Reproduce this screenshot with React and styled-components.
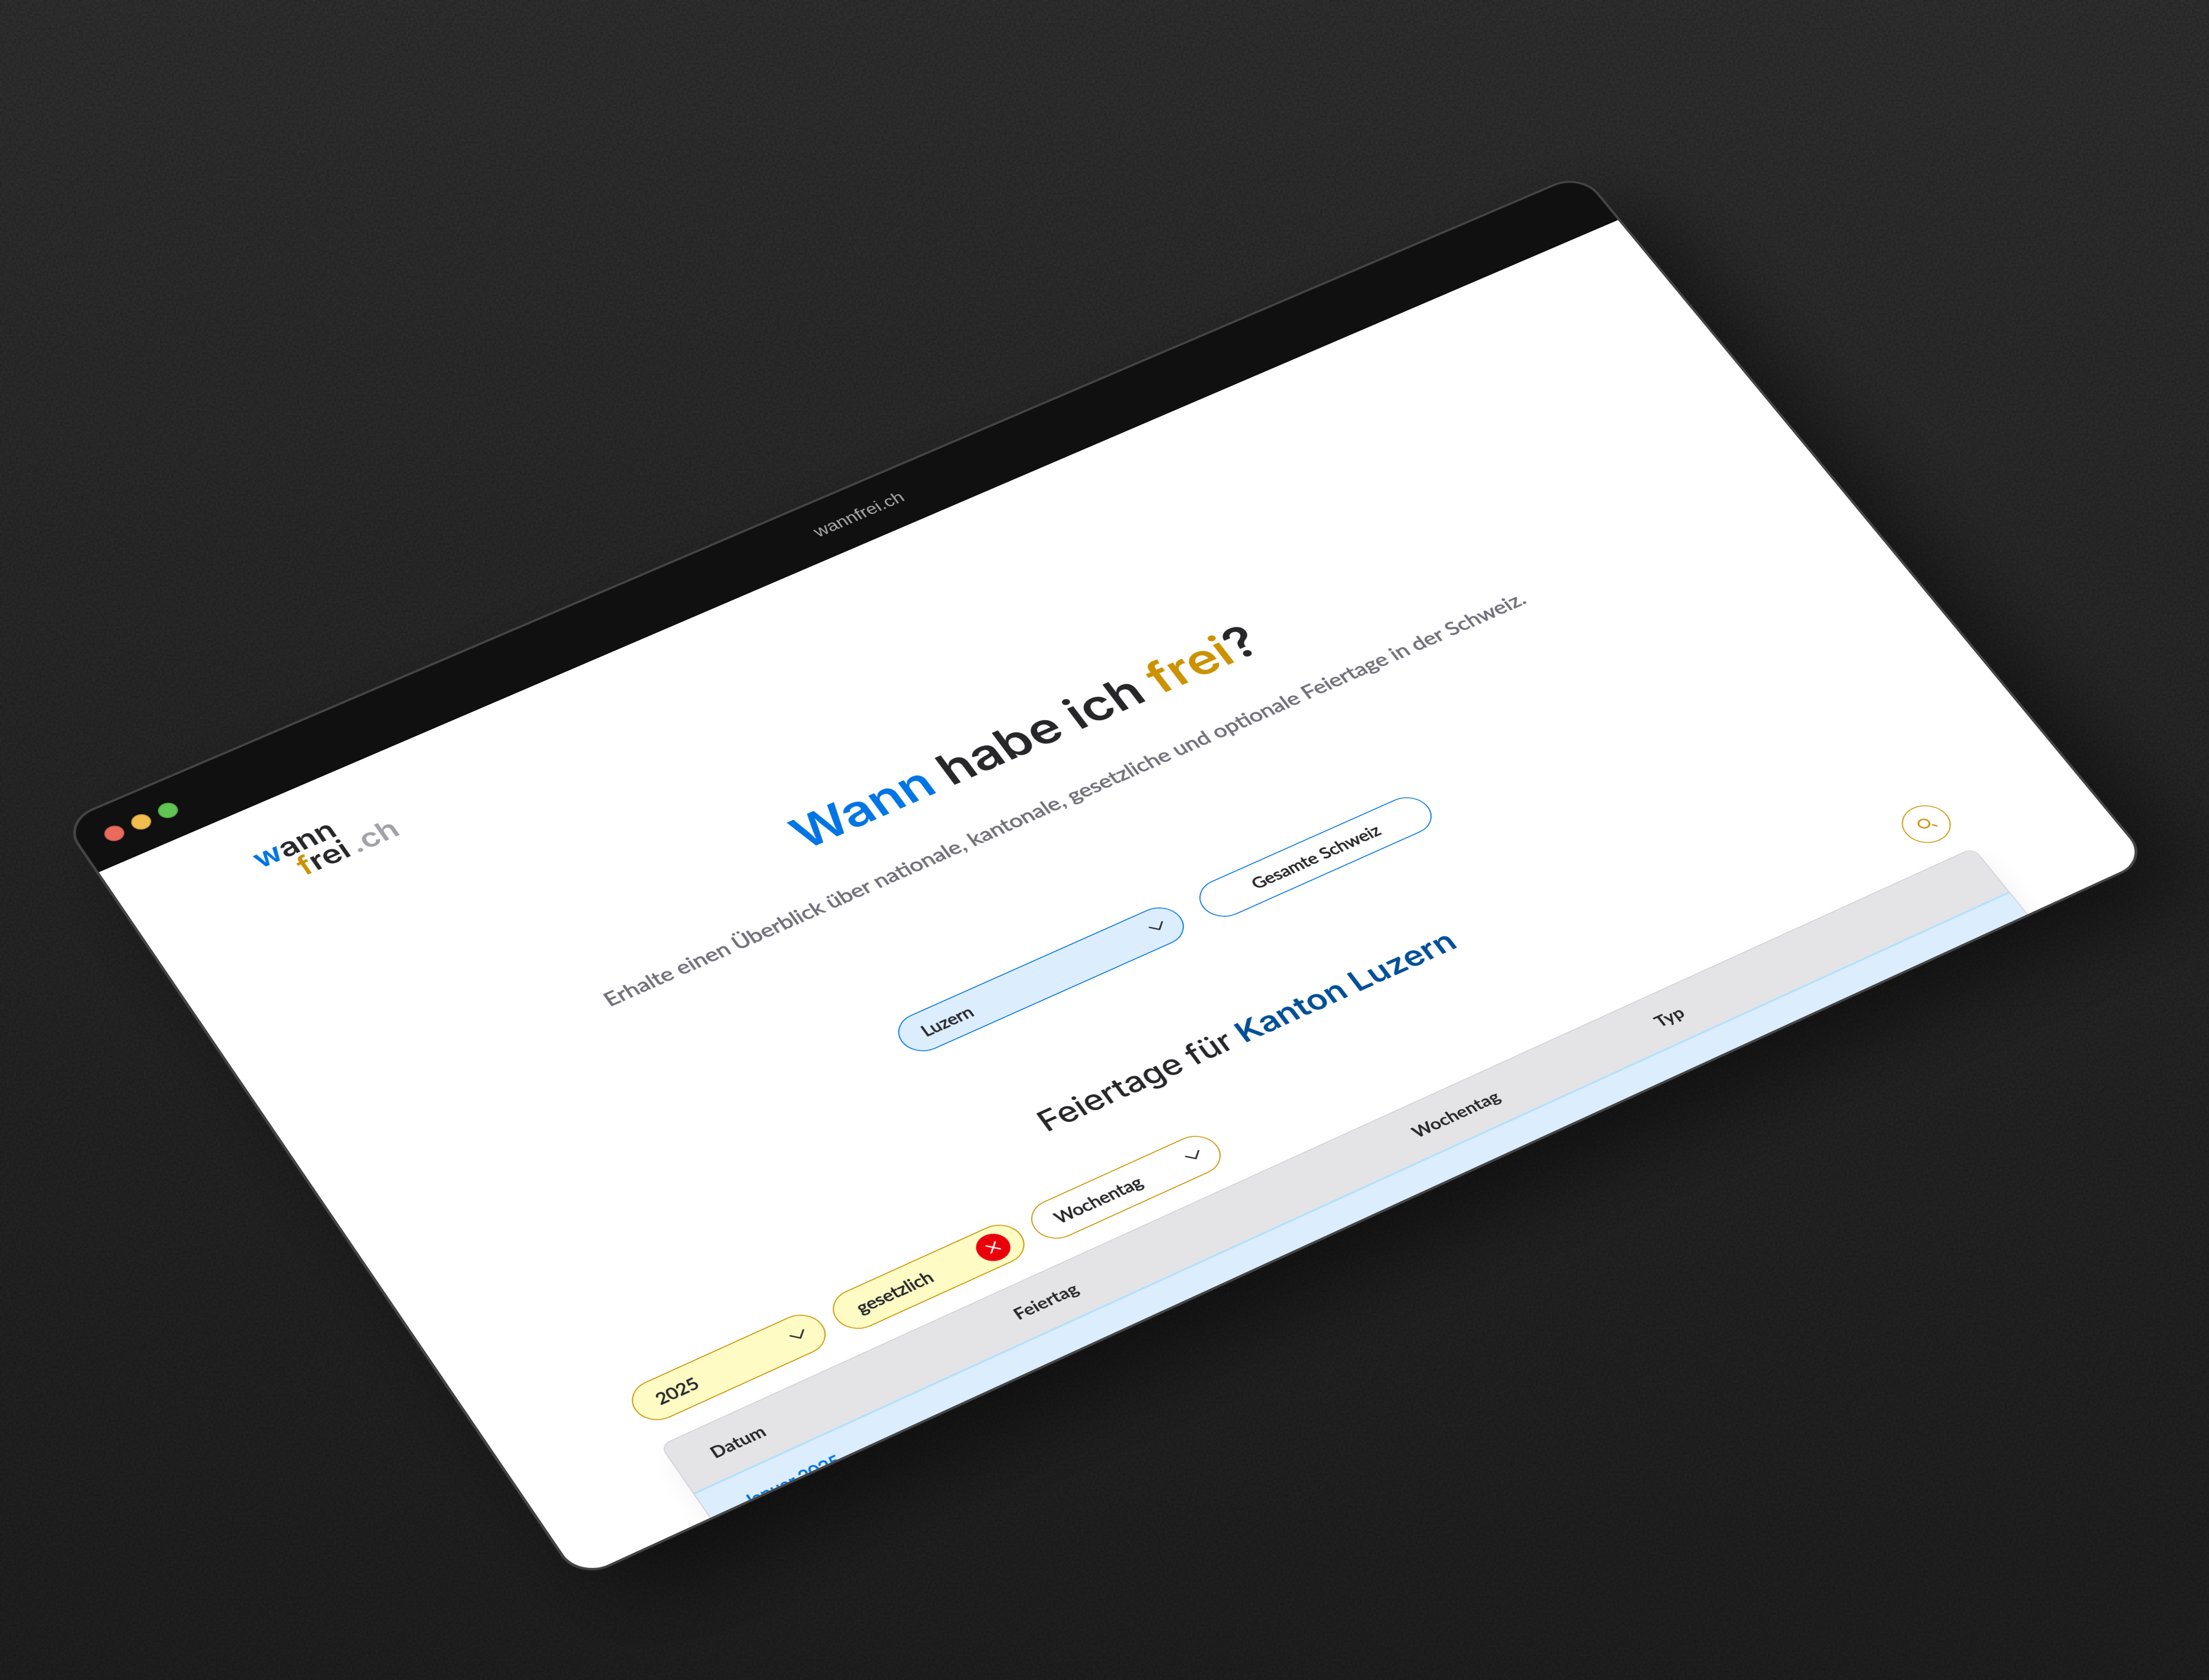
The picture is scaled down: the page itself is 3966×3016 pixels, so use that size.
import React, { useEffect, useState } from "react";
import styled, { createGlobalStyle, css } from "styled-components";

const DESIGN_WIDTH = 3966;
const PERSPECTIVE =
  "matrix3d(0.895841, -0.359106, 0, 0.0000155044, 0.449357, 0.625648, 0, -0.0000264151, 0, 0, 1, 0, 110, 1475, 0, 1)";

const color = {
  ink: "#27272a",
  muted: "#71717a",
  faint: "#a1a1aa",
  blue: "#0275e4",
  navy: "#004f98",
  sky: "#dcedfe",
  skyLine: "#b4e0fb",
  gold: "#cc9200",
  lemon: "#fefbc4",
  red: "#e9000b",
  zinc: "#e4e4e7",
  zincLine: "#d4d4d8",
};

const display = `Inter, "Liberation Sans", sans-serif`;
const body = `Lato, "Open Sans", sans-serif`;

const GlobalStyle = createGlobalStyle`
  *, *::before, *::after { box-sizing: border-box; }
  html { background: #1c1c1c; }
  body { margin: 0; }
`;

const Scene = styled.div`
  position: relative;
  height: 100vh;
  overflow: hidden;
  background: linear-gradient(#2f2f2f, #262626 50%, #1f1f1f);
`;

const Grain = styled.svg`
  position: absolute;
  inset: 0;
  width: 100%;
  height: 100%;
`;

const Device = styled.div`
  position: relative;
  display: flex;
  flex-direction: column;
  width: 3204px;
  aspect-ratio: 400 / 243;
  overflow: hidden;
  border: 5px solid #444444;
  border-radius: 62px;
  background: #444444;
  transform-origin: 0 0;
  box-shadow: 50px 90px 180px rgba(0, 0, 0, 0.5);
`;

const TitleBar = styled.div`
  display: grid;
  grid-template-columns: 1fr auto 1fr;
  align-items: center;
  flex: none;
  height: 134px;
  padding: 0 47px;
  background: #101010;
`;

const Lights = styled.div`
  display: flex;
  gap: 18px;
`;

const Light = styled.span`
  width: 36px;
  height: 36px;
  border: 2px solid rgba(0, 0, 0, 0.16);
  border-radius: 50%;
  background: ${(p) => p.$fill};
`;

const Address = styled.span`
  font: 400 36px/44px "Liberation Sans", Arial, sans-serif;
  color: #a9a9a9;
`;

const Page = styled.div`
  flex: 1;
  min-height: 0;
  overflow: hidden;
  padding: 88px 254px 0;
  background: #ffffff;
  color: ${color.ink};
  font-family: ${body};
`;

const Logo = styled.a`
  display: grid;
  grid-template-columns: auto auto;
  justify-content: start;
  justify-items: end;
  column-gap: 8px;
  font: 600 60px/54px ${display};
  color: ${color.ink};
  text-decoration: none;
`;

const LogoLine = styled.span`
  grid-column: 1;
`;

const LogoSuffix = styled.span`
  grid-row: 2;
  grid-column: 2;
  color: ${color.faint};
`;

const Tint = styled.span`
  color: ${(p) => color[p.$tone]};
`;

const Hero = styled.header`
  display: flex;
  flex-direction: column;
  align-items: center;
  padding-top: 305px;
`;

const Title = styled.h1`
  margin: 0;
  font: 600 100px/96px ${display};
`;

const Lead = styled.p`
  margin: 87px 0 0;
  font: 400 43px/56px ${body};
  color: ${color.muted};
  -webkit-text-stroke: 1px currentColor;
`;

const RegionRow = styled.div`
  display: flex;
  justify-content: center;
  gap: 46px;
  margin-top: 270px;
`;

const control = css`
  height: 88px;
  border: 2px solid ${(p) => color[p.$line]};
  border-radius: 44px;
  background: ${(p) => (p.$fill ? color[p.$fill] : "#ffffff")};
  color: ${color.ink};
  font: 400 34px/44px ${body};
  -webkit-text-stroke: 1px currentColor;
`;

const Field = styled.div`
  position: relative;
  width: ${(p) => (p.$wide ? "572px" : "370px")};
`;

const Select = styled.select`
  ${control}
  width: 100%;
  padding: 0 41px;
  appearance: none;
`;

const Marker = styled.svg`
  position: absolute;
  top: 30px;
  right: 32px;
  width: 30px;
  height: 30px;
  pointer-events: none;
`;

const ClearButton = styled.button`
  position: absolute;
  top: 14px;
  right: 26px;
  display: grid;
  place-items: center;
  width: 60px;
  height: 60px;
  padding: 0;
  border: 0;
  border-radius: 50%;
  background: ${color.red};
`;

const PillButton = styled.button`
  ${control}
  width: 470px;
  padding: 0;
`;

const RoundButton = styled.button`
  ${control}
  display: grid;
  place-items: center;
  width: 88px;
  margin-left: auto;
  padding: 0;
`;

const Subtitle = styled.h2`
  margin: 203px 0 0;
  font: 500 63px/72px ${display};
  text-align: center;
`;

const Strong = styled.span`
  font-weight: 600;
  color: ${color.navy};
`;

const FilterRow = styled.div`
  display: flex;
  gap: 27px;
  margin-top: 118px;
`;

const TableCard = styled.div`
  margin-top: 44px;
  overflow: hidden;
  border: 2px solid ${color.zincLine};
  border-radius: 20px;
  box-shadow: 0 30px 50px rgba(0, 0, 0, 0.06);
`;

const Table = styled.table`
  width: 100%;
  table-layout: fixed;
  border-collapse: collapse;
  font: 400 34px/44px ${body};
`;

const HeadCell = styled.th`
  width: ${(p) => p.$width};
  height: 118px;
  padding: 0 67px;
  border-bottom: 3px solid ${color.zincLine};
  background: ${color.zinc};
  font-weight: 700;
  text-align: left;
`;

const Cell = styled.td`
  height: 118px;
  padding: 0 67px;
  border-top: 4px solid ${color.skyLine};
  background: ${color.sky};
  color: ${color.blue};
  -webkit-text-stroke: 1px currentColor;
`;

const CANTONS = ["Luzern", "Zürich", "Bern", "Uri", "Schwyz", "Zug"];
const COLUMNS = [
  { label: "Datum", width: "22.4%" },
  { label: "Feiertag", width: "30.1%" },
  { label: "Wochentag", width: "18.7%" },
  { label: "Typ", width: "28.8%" },
];

function Chevron() {
  return (
    <Marker viewBox="0 0 30 30" fill="none" stroke={color.ink} strokeWidth="3" aria-hidden="true">
      <path d="M2 7 15 20 28 7" strokeLinecap="round" strokeLinejoin="round" />
    </Marker>
  );
}

function PillSelect({ label, options, line, fill, wide, children }) {
  return (
    <Field $wide={wide}>
      <Select aria-label={label} defaultValue={options[0]} $line={line} $fill={fill}>
        {options.map((o) => (
          <option key={o}>{o}</option>
        ))}
      </Select>
      {children || <Chevron />}
    </Field>
  );
}

function useSceneScale() {
  const [scale, setScale] = useState(() => window.innerWidth / DESIGN_WIDTH);
  useEffect(() => {
    const update = () => setScale(window.innerWidth / DESIGN_WIDTH);
    window.addEventListener("resize", update);
    return () => window.removeEventListener("resize", update);
  }, []);
  return scale;
}

export default function App() {
  const scale = useSceneScale();
  return (
    <>
      <GlobalStyle />
      <Scene>
        <Grain aria-hidden="true">
          <filter id="grain" x="0" y="0" width="100%" height="100%">
            <feTurbulence type="fractalNoise" baseFrequency="0.24" numOctaves="3" stitchTiles="stitch" />
            <feColorMatrix values="0 0 0 0 0  0 0 0 0 0  0 0 0 0 0  0.36 0 0 0 -0.09" />
          </filter>
          <rect width="100%" height="100%" filter="url(#grain)" />
        </Grain>
        <Device style={{ transform: `scale(${scale}) ${PERSPECTIVE}` }}>
          <TitleBar>
            <Lights>
              <Light $fill="#ea6a5e" />
              <Light $fill="#f0bd4f" />
              <Light $fill="#61c554" />
            </Lights>
            <Address>wannfrei.ch</Address>
          </TitleBar>
          <Page>
            <Logo href="#">
              <LogoLine>
                <Tint $tone="blue">w</Tint>ann
              </LogoLine>
              <LogoLine>
                <Tint $tone="gold">f</Tint>rei
              </LogoLine>
              <LogoSuffix>.ch</LogoSuffix>
            </Logo>
            <Hero>
              <Title>
                <Tint $tone="blue">Wann</Tint> habe ich <Tint $tone="gold">frei</Tint>?
              </Title>
              <Lead>
                Erhalte einen Überblick über nationale, kantonale, gesetzliche und optionale
                Feiertage in der Schweiz.
              </Lead>
            </Hero>
            <RegionRow>
              <PillSelect label="Kanton" options={CANTONS} line="blue" fill="sky" wide />
              <PillButton type="button" $line="blue">
                Gesamte Schweiz
              </PillButton>
            </RegionRow>
            <Subtitle>
              Feiertage für <Strong>Kanton Luzern</Strong>
            </Subtitle>
            <FilterRow>
              <PillSelect label="Jahr" options={["2025", "2026"]} line="gold" fill="lemon" />
              <PillSelect label="Typ" options={["gesetzlich", "optional"]} line="gold" fill="lemon">
                <ClearButton type="button" aria-label="Filter entfernen">
                  <svg width="26" height="26" viewBox="0 0 26 26" stroke="#ffffff" strokeWidth="3" strokeLinecap="round">
                    <path d="M4 4 22 22M22 4 4 22" />
                  </svg>
                </ClearButton>
              </PillSelect>
              <PillSelect label="Wochentag" options={["Wochentag", "Montag", "Freitag"]} line="gold" />
              <RoundButton type="button" aria-label="Suchen" $line="gold">
                <svg width="36" height="36" viewBox="0 0 36 36" fill="none" stroke={color.gold} strokeWidth="3" strokeLinecap="round">
                  <circle cx="15" cy="15" r="10" />
                  <path d="M27 25 32 31" />
                </svg>
              </RoundButton>
            </FilterRow>
            <TableCard>
              <Table>
                <thead>
                  <tr>
                    {COLUMNS.map((c) => (
                      <HeadCell key={c.label} $width={c.width} scope="col">
                        {c.label}
                      </HeadCell>
                    ))}
                  </tr>
                </thead>
                <tbody>
                  <tr>
                    <Cell>Januar 2025</Cell>
                    <Cell />
                    <Cell />
                    <Cell />
                  </tr>
                </tbody>
              </Table>
            </TableCard>
          </Page>
        </Device>
      </Scene>
    </>
  );
}
